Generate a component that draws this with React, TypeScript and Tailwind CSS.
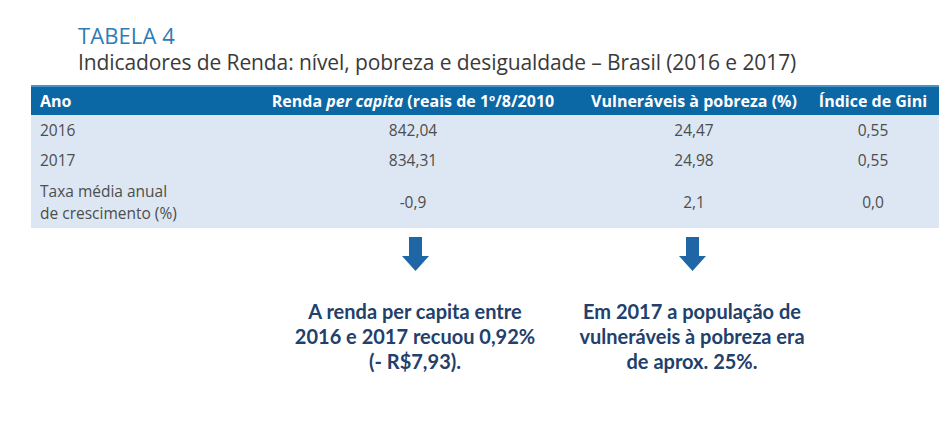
const rows = [
  { ano: "2016", renda: "842,04", vuln: "24,47", gini: "0,55" },
  { ano: "2017", renda: "834,31", vuln: "24,98", gini: "0,55" },
];

function Arrow() {
  return (
    <svg width="27" height="34" viewBox="0 0 27 34">
      <rect x="7" y="0" width="13" height="20" fill="#1f66a6" />
      <polygon points="0,19 27,19 13.5,34" fill="#1f66a6" />
    </svg>
  );
}

const cols = "grid grid-cols-[231px_302px_250px_125px] items-center";

const App = () => {
  return (
    <div className="w-[952px] h-[428px] bg-white overflow-hidden">
      <div className="pl-[78px] pt-[22px] font-['Open_Sans',sans-serif]">
        <h1 className="text-[22px] leading-[26px] text-[#2f7bb6] tracking-[0.1px]">
          TABELA 4
        </h1>
        <h2 className="text-[21px] leading-[28px] text-[#3a3a3a] tracking-[-0.1px]">
          Indicadores de Renda: nível, pobreza e desigualdade – Brasil (2016 e 2017)
        </h2>
      </div>

      <div className="ml-[31px] mt-[9px] w-[908px] font-['Open_Sans',sans-serif] text-[15.5px] whitespace-nowrap">
        <div className={`${cols} h-[30px] bg-[#0c67a5] border-t-2 border-[#4b93c6] font-bold text-[16px] leading-[20px] text-white`}>
          <div className="pl-[9px]">Ano</div>
          <div className="text-center">
            Renda <i>per capita</i> (reais de 1º/8/2010
          </div>
          <div className="text-center pl-[10px]">Vulneráveis à pobreza (%)</div>
          <div className="text-center pr-[7px]">Índice de Gini</div>
        </div>
        <div className="bg-[#dce7f3] text-[#4d4d4d]">
          {rows.map((r) => (
            <div key={r.ano} className={`${cols} h-[30px] pt-[2px]`}>
              <div className="pl-[9px]">{r.ano}</div>
              <div className="text-center">{r.renda}</div>
              <div className="text-center pl-[10px]">{r.vuln}</div>
              <div className="text-center pr-[7px]">{r.gini}</div>
            </div>
          ))}
          <div className={`${cols} h-[53px] leading-[22px]`}>
            <div className="pl-[9px]">
              Taxa média anual
              <br />
              de crescimento (%)
            </div>
            <div className="text-center">-0,9</div>
            <div className="text-center pl-[10px]">2,1</div>
            <div className="text-center pr-[7px]">0,0</div>
          </div>
        </div>
      </div>

      <div className="flex pl-[285px] gap-[17px] mt-[9px] font-['Lato',sans-serif] font-bold text-[20px] leading-[25px] text-[#22406b]">
        <div className="w-[260px] flex flex-col items-center">
          <Arrow />
          <p className="mt-[28px] text-center">
            A renda per capita entre
            <br />
            2016 e 2017 recuou 0,92%
            <br />
            (- R$7,93).
          </p>
        </div>
        <div className="w-[260px] flex flex-col items-center">
          <Arrow />
          <p className="mt-[28px] text-center">
            Em 2017 a população de
            <br />
            vulneráveis à pobreza era
            <br />
            de aprox. 25%.
          </p>
        </div>
      </div>
    </div>
  );
};

export default App;
